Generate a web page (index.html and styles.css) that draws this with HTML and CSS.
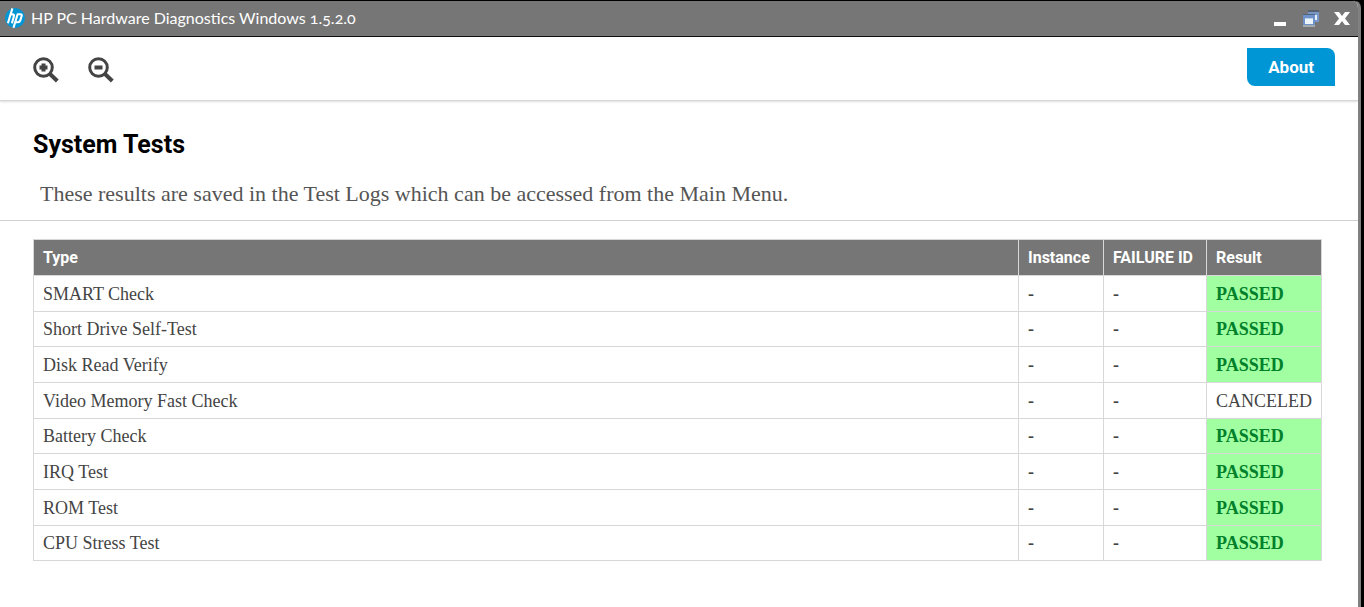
FILE: index.html
```html
<!DOCTYPE html>
<html lang="en">
<head>
<meta charset="utf-8">
<title>HP PC Hardware Diagnostics Windows</title>
<link rel="stylesheet" href="styles.css">
</head>
<body>
<div class="window">
  <header class="titlebar">
    <svg class="logo" viewBox="0 0 20 20" aria-hidden="true">
      <circle cx="10" cy="10" r="10" fill="#0096d6"/>
      <g fill="none" stroke="#fff" stroke-width="2.1" stroke-linejoin="round">
        <path d="M7.4 0.4 2.9 15.2M5.3 6.4h2.3q1.9 0 1.3 1.9L6.9 15.2"/>
        <path d="M8.5 19.8 12.6 6.2h2.6q2 0 1.4 1.9l-1.3 4.3q-.6 1.9-2.4 1.9h-2.3"/>
      </g>
    </svg>
    <span class="app-name">HP PC Hardware Diagnostics Windows 1.5.2.0</span>
    <div class="controls">
      <button class="control" type="button" aria-label="Minimize">
        <svg viewBox="0 0 18 18"><path d="M3 13h12v4H3z" fill="#fff"/></svg>
      </button>
      <button class="control" type="button" aria-label="Restore">
        <svg viewBox="0 0 18 18">
          <path d="M6 1h11v12H6z" fill="#7797c9"/><path d="M6 1h11v2H6z" fill="#56606f"/>
          <path d="M12 6h3v5h-3z" fill="#e6f1fb"/>
          <path d="M1 5h12v12H1z" fill="#6f92cb"/><path d="M1 5h12v1H1z" fill="#53647e"/>
          <path d="M1 16h12v2H1z" fill="#a5aaad"/><path d="M3 10h8v5H3z" fill="#edf5fc"/><path d="M3 9h8v1H3z" fill="#b9cfec"/>
        </svg>
      </button>
      <button class="control" type="button" aria-label="Close">
        <svg viewBox="0 0 18 18"><path d="M1 3h5l3 4 3-4h5l-5 6.500 5 6.500h-5l-3-4-3 4H1l5-6.500z" fill="#fff"/></svg>
      </button>
    </div>
  </header>
  <div class="toolbar">
    <div class="zoom-tools">
      <button class="zoom" type="button" aria-label="Zoom in">
        <svg viewBox="0 0 26 26" fill="none" stroke="#444"><circle cx="10.500" cy="10.500" r="8.800" stroke-width="3"/><path d="m17 17 7.300 7" stroke-width="4"/><path d="M6.500 10.500h8M10.500 6.500v8" stroke-width="4"/></svg>
      </button>
      <button class="zoom" type="button" aria-label="Zoom out">
        <svg viewBox="0 0 26 26" fill="none" stroke="#444"><circle cx="10.500" cy="10.500" r="8.800" stroke-width="3"/><path d="m17 17 7.300 7" stroke-width="4"/><path d="M6.500 10.500h8" stroke-width="4"/></svg>
      </button>
    </div>
    <button class="about" type="button">About</button>
  </div>
  <main>
    <section class="intro">
      <h1>System Tests</h1>
      <p>These results are saved in the Test Logs which can be accessed from the Main Menu.</p>
    </section>
    <section class="results">
      <table>
        <colgroup><col><col class="col-instance"><col class="col-failure"><col class="col-result"></colgroup>
        <thead><tr><th scope="col">Type</th><th scope="col">Instance</th><th scope="col">FAILURE ID</th><th scope="col">Result</th></tr></thead>
        <tbody>
          <tr><td>SMART Check</td><td class="dash">-</td><td class="dash">-</td><td class="passed">PASSED</td></tr>
          <tr><td>Short Drive Self-Test</td><td class="dash">-</td><td class="dash">-</td><td class="passed">PASSED</td></tr>
          <tr><td>Disk Read Verify</td><td class="dash">-</td><td class="dash">-</td><td class="passed">PASSED</td></tr>
          <tr><td>Video Memory Fast Check</td><td class="dash">-</td><td class="dash">-</td><td>CANCELED</td></tr>
          <tr><td>Battery Check</td><td class="dash">-</td><td class="dash">-</td><td class="passed">PASSED</td></tr>
          <tr><td>IRQ Test</td><td class="dash">-</td><td class="dash">-</td><td class="passed">PASSED</td></tr>
          <tr><td>ROM Test</td><td class="dash">-</td><td class="dash">-</td><td class="passed">PASSED</td></tr>
          <tr><td>CPU Stress Test</td><td class="dash">-</td><td class="dash">-</td><td class="passed">PASSED</td></tr>
        </tbody>
      </table>
    </section>
  </main>
</div>
</body>
</html>
```
FILE: styles.css
```css
* { box-sizing: border-box; }
body { margin: 0; background: #000; font-family: "Liberation Serif", serif; color: #444; }
button { margin: 0; padding: 0; border: 0; background: none; cursor: pointer; }
svg { display: block; width: 100%; height: 100%; }

.window {
  min-height: 100vh;
  margin-right: 3px;
  border-top: 1px solid #000;
  border-right: 3px solid #808080;
  border-top-right-radius: 8px;
  background: #fff;
  overflow: hidden;
}
.titlebar {
  display: flex;
  align-items: center;
  height: 36px;
  padding: 0 7px 2px 5px;
  border-bottom: 1px solid #000;
  background: #767676;
  color: #fff;
}
.logo { width: 20px; height: 20px; }
.app-name { flex: 1; margin-left: 6px; font: 16px/24px Lato, sans-serif; font-variant-numeric: oldstyle-nums; }
.controls { display: flex; gap: 13px; }
.control { width: 18px; height: 18px; }

.toolbar {
  display: flex;
  justify-content: space-between;
  align-items: center;
  height: 64px;
  padding: 0 23px 4px 33px;
  border-bottom: 1px solid #d6d6d6;
  box-shadow: 0 1px 2px #ddd;
}
.zoom-tools { display: flex; gap: 29px; padding-top: 6px; }
.zoom { width: 26px; height: 26px; }
.about {
  height: 38px;
  padding: 0 21px;
  border-radius: 0 8px 0 8px;
  background: #0096d6;
  color: #fff;
  font: bold 17px/24px Roboto, sans-serif;
}

.intro { padding: 28px 33px 13px; border-bottom: 1px solid #d0d0d0; }
h1 { margin: 0; color: #000; font: bold 25px/32px Roboto, sans-serif; }
.intro p { margin: 19px 0 0; padding-left: 7px; color: #555; font-size: 22px; line-height: 27px; }

.results { padding: 18px 36px 24px 33px; }
table { width: 100%; border-collapse: collapse; table-layout: fixed; }
.col-instance { width: 85px; }
.col-failure { width: 103px; }
.col-result { width: 115px; }
th, td { padding: 0 9px; border: 1px solid #d8d8d8; text-align: left; font-size: 18px; line-height: 24px; white-space: nowrap; }
tr { height: 36px; }
tr:nth-child(3n + 2) { height: 35px; }
th { background: #767676; color: #fff; font-family: Roboto, sans-serif; font-size: 16px; }
.dash { font-weight: bold; }
.passed { background: #a1ffa1; color: #00802b; font-weight: bold; }
```
